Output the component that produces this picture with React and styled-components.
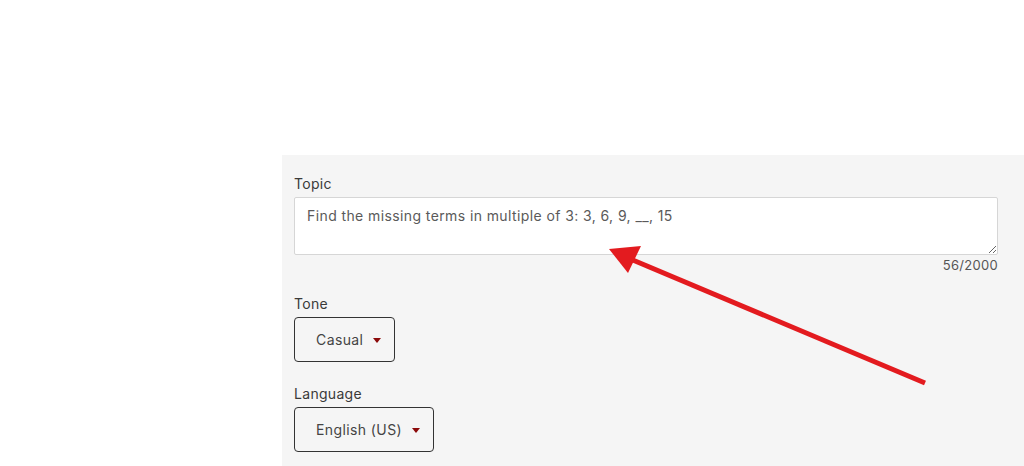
import React from "react";
import styled, { createGlobalStyle } from "styled-components";

const GlobalStyle = createGlobalStyle`
  html, body {
    margin: 0;
    padding: 0;
    background: #ffffff;
    font-family: Inter, "Noto Sans", sans-serif;
  }
`;

const Page = styled.div`
  position: relative;
  width: 1024px;
  height: 466px;
  padding-top: 155px;
  padding-left: 282px;
  box-sizing: border-box;
  overflow: hidden;
`;

const Panel = styled.div`
  background: #f5f5f5;
  height: 100%;
  padding: 20px 26px 0 12px;
  box-sizing: border-box;
  display: flex;
  flex-direction: column;
`;

const Field = styled.div`
  display: flex;
  flex-direction: column;
  margin-bottom: ${(p) => p.gap || 0}px;
`;

const Label = styled.label`
  font-size: 14px;
  letter-spacing: 0.3px;
  color: #3a3a3a;
  line-height: 17px;
  margin-bottom: 5px;
`;

const TextArea = styled.textarea`
  width: 704px;
  height: 58px;
  box-sizing: border-box;
  border: 1px solid #d6d6d6;
  border-radius: 2px;
  background: #ffffff;
  padding: 9px 12px 8px;
  font-family: Inter, "Noto Sans", sans-serif;
  font-size: 14px;
  letter-spacing: 0.4px;
  line-height: 18px;
  color: #5a5a5a;
  resize: vertical;
  outline: none;
`;

const Counter = styled.div`
  width: 704px;
  text-align: right;
  font-size: 13px;
  letter-spacing: 0.3px;
  color: #555;
  line-height: 18px;
  margin-top: 1px;
`;

const Select = styled.div`
  display: inline-flex;
  align-items: center;
  align-self: flex-start;
  height: 45px;
  box-sizing: border-box;
  border: 1px solid #333;
  border-radius: 4px;
  padding: 0 13px 0 21px;
  gap: 10px;
  font-size: 14px;
  letter-spacing: 0.4px;
  color: #444;
`;

const Caret = styled.span`
  width: 0;
  height: 0;
  border-left: 4px solid transparent;
  border-right: 4px solid transparent;
  border-top: 5px solid #8b0a0a;
  margin-top: 1px;
`;

const Arrow = styled.svg`
  position: absolute;
  left: 0;
  top: 0;
  pointer-events: none;
`;

export default function App() {
  return (
    <>
      <GlobalStyle />
      <Page>
        <Panel>
          <Field gap={21}>
            <Label>Topic</Label>
            <TextArea
              readOnly
              value="Find the missing terms in multiple of 3: 3, 6, 9, __, 15"
            />
            <Counter>56/2000</Counter>
          </Field>
          <Field gap={23}>
            <Label>Tone</Label>
            <Select>
              Casual <Caret />
            </Select>
          </Field>
          <Field>
            <Label>Language</Label>
            <Select>
              English (US) <Caret />
            </Select>
          </Field>
        </Panel>
        <Arrow width="1024" height="466" viewBox="0 0 1024 466">
          <line x1="925" y1="383" x2="628" y2="258" stroke="#e31b1f" strokeWidth="5" />
          <polygon points="609,249 641,246 628,273" fill="#e31b1f" />
        </Arrow>
      </Page>
    </>
  );
}
